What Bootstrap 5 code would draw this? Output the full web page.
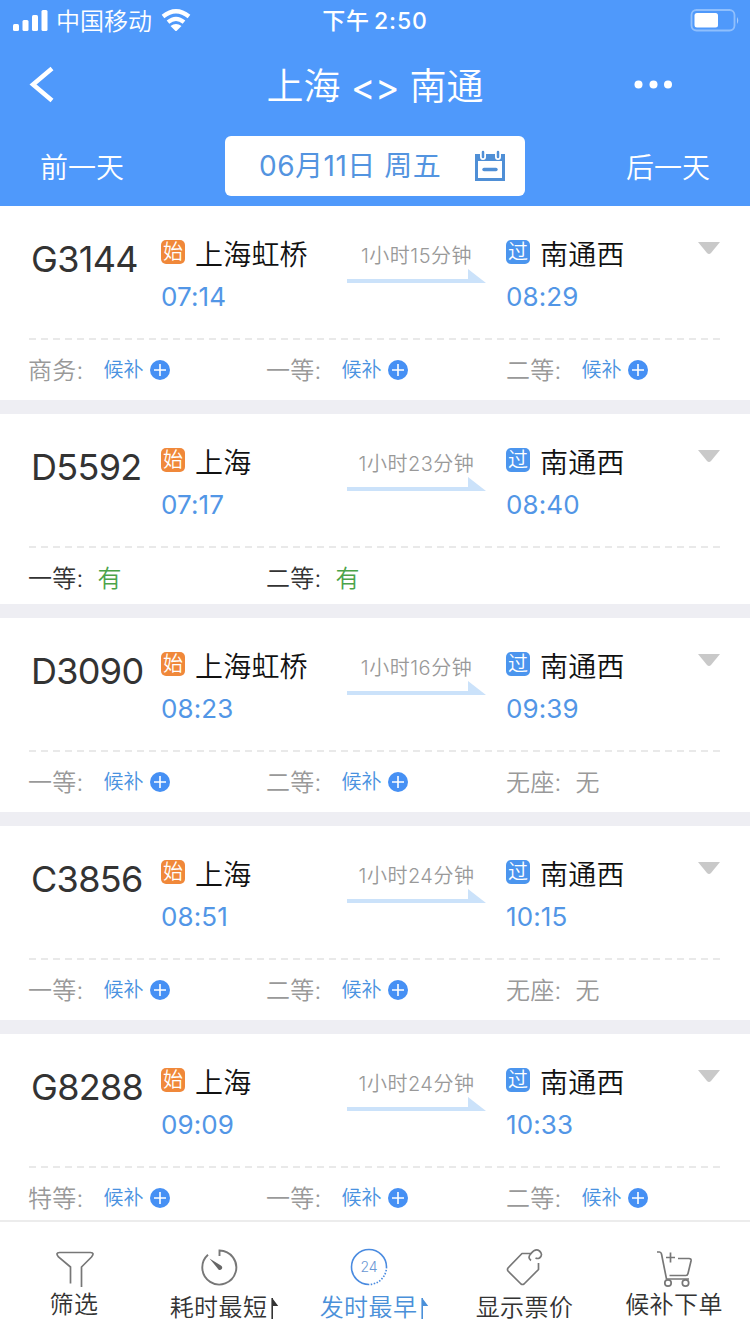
<!DOCTYPE html>
<html lang="zh-CN">
<head>
<meta charset="utf-8">
<meta name="viewport" content="width=device-width, initial-scale=1">
<title>上海 - 南通</title>
<link href="https://cdn.jsdelivr.net/npm/bootstrap@5.3.0/dist/css/bootstrap.min.css" rel="stylesheet">
<style>
body{font-family:Inter,"Noto Sans CJK SC",sans-serif;font-weight:350;background:#eeeef3;width:750px;height:1334px;overflow:hidden}
.app-top{background:#4f99fb;color:#fff;height:206px}
.status-bar{height:42px;font-size:24px;line-height:42px}
.status-bar .side{width:250px}
.carrier{line-height:45px;margin-left:-1px}
.clock{font-size:23px;line-height:43px;font-weight:500;letter-spacing:.9px;word-spacing:-3px}
.title-bar{height:86px;line-height:89px;font-size:37px}
.title-bar .side{width:120px;height:86px}
.angles{font-weight:400;letter-spacing:-.5px}
.day-bar{height:64px;padding-top:8px;font-size:28px;line-height:64px}
.day-btn{width:225px}
.date-box{width:300px;height:60px;border-radius:6px;background:#fff;color:#5394e0;font-size:28px;line-height:63px;padding:0 18px 0 34px}
.date-text{letter-spacing:.5px;font-weight:400}
.train{background:#fff;height:194px;margin-bottom:14px}
.train.short{height:190px}
.train-main{height:132px;padding-right:29px}
.train-no{width:161px;padding:28px 0 0 31px;font-size:36px;line-height:51px;font-weight:400;color:#333;letter-spacing:-.7px}
.from-col{width:186px;padding-top:27px}
.dur-col{width:139px;padding-top:35px;font-size:20px;line-height:30px;color:#999;letter-spacing:.5px}
.dur-col svg{margin-top:-2px}
.to-col{margin-left:20px;padding-top:27px}
.station{font-size:28px;line-height:44px;height:44px;color:#111;gap:10px;letter-spacing:.2px}
.tag{width:24px;height:24px;border-radius:5px;font-size:20px;line-height:25px;color:#fff;margin-top:-7px;letter-spacing:0}
.tag-start{background:#f0883a}
.tag-pass{background:#4b95ee}
.time{font-size:26px;line-height:39px;font-weight:400;color:#5296e6;letter-spacing:.1px}
.caret{margin-top:35px}
.dash{height:2px;margin:0 30px 0 29px;background:repeating-linear-gradient(90deg,#e9e9e9 0 7px,transparent 7px 12px)}
.seats{padding-left:28px;font-size:24px;line-height:62px;height:60px;color:#999}
.seat{width:238px;height:60px}
.seat + .seat{width:240px}
.seat-name{width:75.5px;letter-spacing:.3px}
.seat-name.tight{width:69.5px}
.wait{font-size:20px;color:#4a92e0;gap:6.5px;height:60px;line-height:64px}
.has-seat{color:#333}
.yes{color:#4ba349}
.tab-bar{height:114px;background:#fff;border-top:2px solid #ececec;font-size:24px;color:#333}
.tab-item{width:150px;padding-top:26px}
.tab-item .caption{line-height:38px;letter-spacing:.4px;margin-top:-1px;margin-left:-1px}
.tab-item .caption.high{margin-top:-4px;margin-left:-2px}
.tab-item .caption.sorted{margin-left:-1px}
.dial{margin-right:13px}
.tab-on{color:#4a90d9}
</style>
</head>
<body class="d-flex flex-column">
<svg class="d-none">
  <symbol id="plus" viewBox="0 0 20 20"><circle cx="10" cy="10" r="10" fill="#4690f4"/><path d="M10 4v12M4 10h12" stroke="#fff" stroke-width="1.6"/></symbol>
  <symbol id="arrow" viewBox="0 0 139 14"><path d="M0 10h121V0l18 14H0z" fill="#cbe2fa"/></symbol>
  <symbol id="down" viewBox="0 0 24 14"><path d="M1 1h22L14 12q-2 2-4 0z" fill="#c9c9c9"/></symbol>
  <symbol id="flag" viewBox="0 0 8 22"><path d="M1.2 22V1l6 8H1.2" fill="currentColor"/><path d="M1.2 1v21" stroke="currentColor" stroke-width="1.6"/></symbol>
</svg>

<header class="app-top flex-shrink-0">
  <div class="status-bar d-flex justify-content-between">
    <div class="side d-flex align-items-center">
      <svg class="ms-2 me-2" width="41" height="24" viewBox="0 0 41 24" fill="#fff"><rect x="5" y="15" width="6" height="7" rx="1.5"/><rect x="14.500" y="11" width="6" height="11" rx="1.500"/><rect x="24" y="6" width="6" height="16" rx="1.500"/><rect x="33.500" y="1" width="6" height="21" rx="1.500"/></svg>
      <span class="carrier">中国移动</span>
      <svg class="ms-2" width="32" height="24" viewBox="0 0 32 24" fill="none" stroke="#fff" stroke-width="4.200"><path d="M3 7.500q13-10.500 26 0M8 13.200q8-6.500 16 0"/><path d="M10.500 17q5.500-4 11 0L17 21.500q-1 1-2 0z" fill="#fff" stroke="none"/></svg>
    </div>
    <div class="clock">下午 2:50</div>
    <div class="side d-flex align-items-center justify-content-end">
      <svg class="me-2" width="52" height="24" viewBox="0 0 52 24"><rect x="1.500" y="1" width="43" height="20.500" rx="5" fill="none" stroke="#8fbffd" stroke-width="1.800"/><rect x="4.500" y="4" width="23.500" height="14.500" rx="2.500" fill="#fff"/><path d="M47 8q2.500 3.500 0 7z" fill="#a5cbfd"/></svg>
    </div>
  </div>
  <div class="title-bar d-flex justify-content-between">
    <div class="side d-flex align-items-center"><svg class="ms-4" width="34" height="38" viewBox="0 0 34 38" fill="none" stroke="#fff" stroke-width="4.500"><path d="M28 2.500L9 18.500l19 16" stroke-linejoin="miter"/></svg></div>
    <div class="route">上海 <span class="angles">&lt;&gt;</span> 南通</div>
    <div class="side d-flex align-items-center"><svg width="46" height="14" viewBox="0 0 46 14" fill="#fff"><circle cx="8.500" cy="6.500" r="4"/><circle cx="23.500" cy="6.500" r="4"/><circle cx="38" cy="6.500" r="4"/></svg></div>
  </div>
  <div class="day-bar d-flex">
    <div class="day-btn ps-3"><span class="ms-4">前一天</span></div>
    <div class="date-box d-flex align-items-center justify-content-between">
      <span class="date-text">06月11日 周五</span>
      <svg width="34" height="34" viewBox="0 0 34 34"><path d="M2 5h30v27H2z" fill="#4f8fd6"/><path d="M5 12h24v17H5z" fill="#fff"/><path d="M10 3v5M25 3v5" stroke="#fff" stroke-width="6" stroke-linecap="round"/><path d="M10 3v5M25 3v5" stroke="#4f8fd6" stroke-width="2.500" stroke-linecap="round"/><path d="M11 20.500h12" stroke="#4f8fd6" stroke-width="3.400" stroke-linecap="round"/></svg>
    </div>
    <div class="day-btn text-end pe-3"><span class="me-4">后一天</span></div>
  </div>
</header>

<main class="flex-grow-1 overflow-hidden">
  <article class="train">
    <div class="train-main d-flex">
      <div class="train-no">G3144</div>
      <div class="from-col"><div class="station d-flex align-items-center"><span class="tag tag-start text-center">始</span>上海虹桥</div><div class="time">07:14</div></div>
      <div class="dur-col text-center">1小时15分钟<svg class="d-block" width="139" height="14"><use href="#arrow"/></svg></div>
      <div class="to-col"><div class="station d-flex align-items-center"><span class="tag tag-pass text-center">过</span>南通西</div><div class="time">08:29</div></div>
      <svg class="caret ms-auto" width="24" height="14"><use href="#down"/></svg>
    </div>
    <div class="dash"></div>
    <div class="seats d-flex">
      <div class="seat d-flex"><span class="seat-name">商务:</span><span class="wait d-flex align-items-center">候补<svg width="20" height="20"><use href="#plus"/></svg></span></div>
      <div class="seat d-flex"><span class="seat-name">一等:</span><span class="wait d-flex align-items-center">候补<svg width="20" height="20"><use href="#plus"/></svg></span></div>
      <div class="seat d-flex"><span class="seat-name">二等:</span><span class="wait d-flex align-items-center">候补<svg width="20" height="20"><use href="#plus"/></svg></span></div>
    </div>
  </article>

  <article class="train short">
    <div class="train-main d-flex">
      <div class="train-no">D5592</div>
      <div class="from-col"><div class="station d-flex align-items-center"><span class="tag tag-start text-center">始</span>上海</div><div class="time">07:17</div></div>
      <div class="dur-col text-center">1小时23分钟<svg class="d-block" width="139" height="14"><use href="#arrow"/></svg></div>
      <div class="to-col"><div class="station d-flex align-items-center"><span class="tag tag-pass text-center">过</span>南通西</div><div class="time">08:40</div></div>
      <svg class="caret ms-auto" width="24" height="14"><use href="#down"/></svg>
    </div>
    <div class="dash"></div>
    <div class="seats d-flex">
      <div class="seat d-flex has-seat"><span class="seat-name tight">一等:</span><span class="yes">有</span></div>
      <div class="seat d-flex has-seat"><span class="seat-name tight">二等:</span><span class="yes">有</span></div>
    </div>
  </article>

  <article class="train">
    <div class="train-main d-flex">
      <div class="train-no">D3090</div>
      <div class="from-col"><div class="station d-flex align-items-center"><span class="tag tag-start text-center">始</span>上海虹桥</div><div class="time">08:23</div></div>
      <div class="dur-col text-center">1小时16分钟<svg class="d-block" width="139" height="14"><use href="#arrow"/></svg></div>
      <div class="to-col"><div class="station d-flex align-items-center"><span class="tag tag-pass text-center">过</span>南通西</div><div class="time">09:39</div></div>
      <svg class="caret ms-auto" width="24" height="14"><use href="#down"/></svg>
    </div>
    <div class="dash"></div>
    <div class="seats d-flex">
      <div class="seat d-flex"><span class="seat-name">一等:</span><span class="wait d-flex align-items-center">候补<svg width="20" height="20"><use href="#plus"/></svg></span></div>
      <div class="seat d-flex"><span class="seat-name">二等:</span><span class="wait d-flex align-items-center">候补<svg width="20" height="20"><use href="#plus"/></svg></span></div>
      <div class="seat d-flex"><span class="seat-name tight">无座:</span><span>无</span></div>
    </div>
  </article>

  <article class="train">
    <div class="train-main d-flex">
      <div class="train-no">C3856</div>
      <div class="from-col"><div class="station d-flex align-items-center"><span class="tag tag-start text-center">始</span>上海</div><div class="time">08:51</div></div>
      <div class="dur-col text-center">1小时24分钟<svg class="d-block" width="139" height="14"><use href="#arrow"/></svg></div>
      <div class="to-col"><div class="station d-flex align-items-center"><span class="tag tag-pass text-center">过</span>南通西</div><div class="time">10:15</div></div>
      <svg class="caret ms-auto" width="24" height="14"><use href="#down"/></svg>
    </div>
    <div class="dash"></div>
    <div class="seats d-flex">
      <div class="seat d-flex"><span class="seat-name">一等:</span><span class="wait d-flex align-items-center">候补<svg width="20" height="20"><use href="#plus"/></svg></span></div>
      <div class="seat d-flex"><span class="seat-name">二等:</span><span class="wait d-flex align-items-center">候补<svg width="20" height="20"><use href="#plus"/></svg></span></div>
      <div class="seat d-flex"><span class="seat-name tight">无座:</span><span>无</span></div>
    </div>
  </article>

  <article class="train">
    <div class="train-main d-flex">
      <div class="train-no">G8288</div>
      <div class="from-col"><div class="station d-flex align-items-center"><span class="tag tag-start text-center">始</span>上海</div><div class="time">09:09</div></div>
      <div class="dur-col text-center">1小时24分钟<svg class="d-block" width="139" height="14"><use href="#arrow"/></svg></div>
      <div class="to-col"><div class="station d-flex align-items-center"><span class="tag tag-pass text-center">过</span>南通西</div><div class="time">10:33</div></div>
      <svg class="caret ms-auto" width="24" height="14"><use href="#down"/></svg>
    </div>
    <div class="dash"></div>
    <div class="seats d-flex">
      <div class="seat d-flex"><span class="seat-name">特等:</span><span class="wait d-flex align-items-center">候补<svg width="20" height="20"><use href="#plus"/></svg></span></div>
      <div class="seat d-flex"><span class="seat-name">一等:</span><span class="wait d-flex align-items-center">候补<svg width="20" height="20"><use href="#plus"/></svg></span></div>
      <div class="seat d-flex"><span class="seat-name">二等:</span><span class="wait d-flex align-items-center">候补<svg width="20" height="20"><use href="#plus"/></svg></span></div>
    </div>
  </article>
</main>

<nav class="tab-bar d-flex flex-shrink-0">
  <div class="tab-item d-flex flex-column align-items-center">
    <svg width="40" height="42" viewBox="0 0 40 42" fill="none" stroke="#777" stroke-width="1.700"><path d="M15.500 35.500V19L3.500 9Q0 4.500 4.500 4.500h31Q40 4.500 36.500 9l-10 10v20"/></svg>
    <span class="caption high">筛选</span>
  </div>
  <div class="tab-item d-flex flex-column align-items-center">
    <svg class="dial" width="40" height="42" viewBox="0 0 40 42" fill="none" stroke="#777" stroke-width="1.900"><path d="M20.500 8V2.500A17 17 0 1 1 9 6.800"/><path d="M10.500 10.500l11 6.800a2.400 2.400 0 1 1-3 3z" fill="#666" stroke="none"/></svg>
    <span class="caption sorted d-flex align-items-center">耗时最短<svg class="ms-1" width="8" height="22"><use href="#flag"/></svg></span>
  </div>
  <div class="tab-item tab-on d-flex flex-column align-items-center">
    <svg class="dial" width="40" height="42" viewBox="0 0 40 42" fill="none" stroke="#4a8be0" stroke-width="1.600"><path d="M20 36.500A17.500 17.500 0 1 1 37.500 19"/><path d="M37.500 19A17.500 17.500 0 0 1 20 36.500" stroke-dasharray="1.500 1.500"/><text x="20" y="24" text-anchor="middle" font-size="14" fill="#6a97d4" stroke="none">24</text></svg>
    <span class="caption sorted d-flex align-items-center">发时最早<svg class="ms-1" width="8" height="22"><use href="#flag"/></svg></span>
  </div>
  <div class="tab-item d-flex flex-column align-items-center">
    <svg width="40" height="42" viewBox="0 0 40 42" fill="none" stroke="#777" stroke-width="1.700" stroke-linejoin="round"><path d="M26.500 5.500H17L3 20q-1 1.500 0 3l13 13q1.500 1 3 0l14.500-14.500V15"/><path d="M26 12.500q-4-3 0-7 4.500-5.500 8.500-2.500 4 3.500 0 7-2 1-4 0"/></svg>
    <span class="caption">显示票价</span>
  </div>
  <div class="tab-item d-flex flex-column align-items-center">
    <svg width="40" height="42" viewBox="0 0 40 42" fill="none" stroke="#777" stroke-width="1.700"><path d="M2 4h2.500q1.500 0 2 2l5 25H34M14.500 27.500H31q1.500 0 2-2L36 13q.5-2.500-2-2.500H23M11 9.500h9M15.500 4.500v10"/><circle cx="13" cy="35" r="3.200"/><circle cx="30.500" cy="35" r="3.200"/></svg>
    <span class="caption high">候补下单</span>
  </div>
</nav>
<script src="https://cdn.jsdelivr.net/npm/bootstrap@5.3.0/dist/js/bootstrap.bundle.min.js"></script>
</body>
</html>
